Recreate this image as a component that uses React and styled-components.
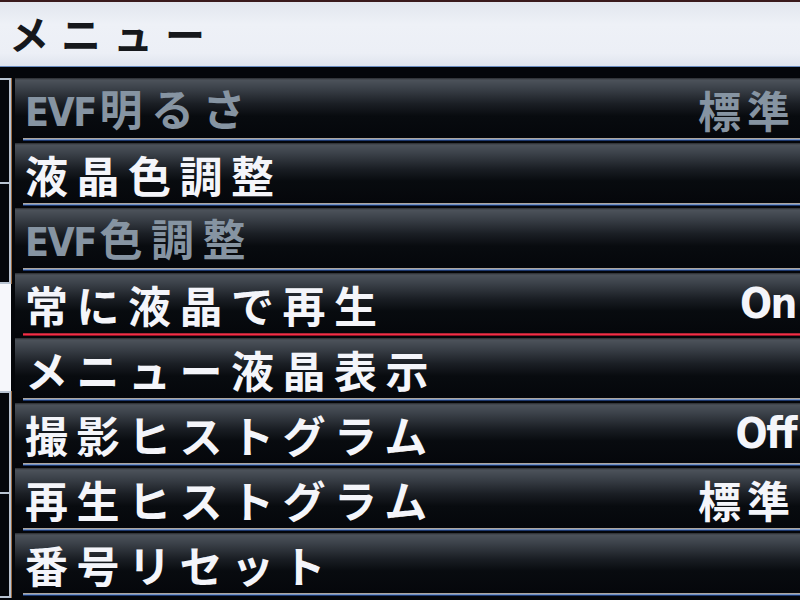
import React from 'react';
import styled, { createGlobalStyle } from 'styled-components';

const GlobalStyle = createGlobalStyle`
  html, body {
    margin: 0;
    padding: 0;
    background: #000;
  }
  body {
    font-family: "Noto Sans CJK JP", "Noto Sans", sans-serif;
  }
`;

const Screen = styled.div`
  width: 800px;
  height: 600px;
  overflow: hidden;
  background: #04060a;
  display: flex;
  flex-direction: column;
`;

const Header = styled.div`
  height: 64px;
  flex: none;
  display: flex;
  align-items: center;
  padding-left: 9px;
  background: linear-gradient(180deg, #e2e6ee 0%, #eef1f7 35%, #eceff6 80%, #dfe4ee 100%);
  border-top: 2px solid #3a1a1c;
  border-bottom: 1px solid #6a8cc0;
`;

const Title = styled.div`
  font-size: 40px;
  font-weight: 700;
  color: #16181c;
  letter-spacing: 12px;
  line-height: 1;
  margin-top: -2px;
`;

const Body = styled.div`
  flex: 1;
  display: flex;
  gap: 4px;
  padding-top: 11px;
`;

const Track = styled.div`
  width: 11px;
  flex: none;
  display: flex;
  flex-direction: column;
`;

const Segment = styled.div`
  height: ${p => p.h}px;
  flex: none;
  box-sizing: border-box;
  background: #05070b;
  border: 2px solid #b9c4d2;
  border-left: 0;
  border-top-width: ${p => (p.first ? 2 : 0)}px;
  box-shadow: 1px 0 0 #9a6a40;
`;

const Thumb = styled.div`
  height: ${p => p.h}px;
  flex: none;
  background: #f6f7fb;
`;

const List = styled.div`
  flex: 1;
  display: flex;
  flex-direction: column;
`;

const Row = styled.div`
  height: 65px;
  flex: none;
  display: flex;
  flex-direction: column;
`;

const Band = styled.div`
  height: 60px;
  display: flex;
  align-items: center;
  justify-content: space-between;
  padding: 2px 4px 0 10px;
  box-sizing: border-box;
  background: linear-gradient(180deg, #2a2c30 0px, #4c525a 2px, #3c424a 10px, #1a1e24 26px, #080b0f 38px, #05070b 100%);
`;

const Label = styled.span`
  font-size: 43px;
  font-weight: 700;
  letter-spacing: 8.5px;
  line-height: 1;
  color: ${p => (p.dim ? '#8694a2' : '#f4f5fa')};
  white-space: nowrap;
`;

const Latin = styled.span`
  font-family: "DejaVu Sans Condensed", "DejaVu Sans", sans-serif;
  font-weight: 700;
  font-size: 39px;
  letter-spacing: -1.5px;
  margin-right: 4px;
`;

const Value = styled.span`
  font-size: ${p => (p.latin ? 42 : 43)}px;
  font-family: ${p => (p.latin ? '"DejaVu Sans Condensed", "DejaVu Sans", sans-serif' : 'inherit')};
  font-weight: 700;
  letter-spacing: ${p => (p.latin ? -1.5 : 6)}px;
  line-height: 1;
  color: ${p => (p.dim ? '#8694a2' : '#f4f5fa')};
`;

const Rule = styled.div`
  height: 3px;
  margin-left: 8px;
  background: ${p =>
    p.active
      ? 'linear-gradient(180deg, #5a1018 0, #ff3a52 1px, #e8203a 2px, #3a0a10 3px)'
      : 'linear-gradient(180deg, #a07a52 0, #b8d0ea 1px, #2c56a8 2px, #0a1630 3px)'};
`;

const items = [
  { pre: 'EVF', label: '明るさ', value: '標準', dim: true },
  { label: '液晶色調整' },
  { pre: 'EVF', label: '色調整', dim: true },
  { label: '常に液晶で再生', value: 'On', latin: true, active: true },
  { label: 'メニュー液晶表示' },
  { label: '撮影ヒストグラム', value: 'Off', latin: true },
  { label: '再生ヒストグラム', value: '標準' },
  { label: '番号リセット' },
];

export default function App() {
  return (
    <Screen>
      <GlobalStyle />
      <Header>
        <Title>メニュー</Title>
      </Header>
      <Body>
        <Track>
          <Segment h={106} first />
          <Segment h={100} />
          <Thumb h={107} />
          <Segment h={103} first />
          <Segment h={104} />
        </Track>
        <List>
          {items.map((item, i) => (
            <Row key={i}>
              <Band>
                <Label dim={item.dim}>
                  {item.pre && <Latin>{item.pre}</Latin>}
                  {item.label}
                </Label>
                {item.value && (
                  <Value dim={item.dim} latin={item.latin}>
                    {item.value}
                  </Value>
                )}
              </Band>
              <Rule active={item.active} />
            </Row>
          ))}
        </List>
      </Body>
    </Screen>
  );
}
